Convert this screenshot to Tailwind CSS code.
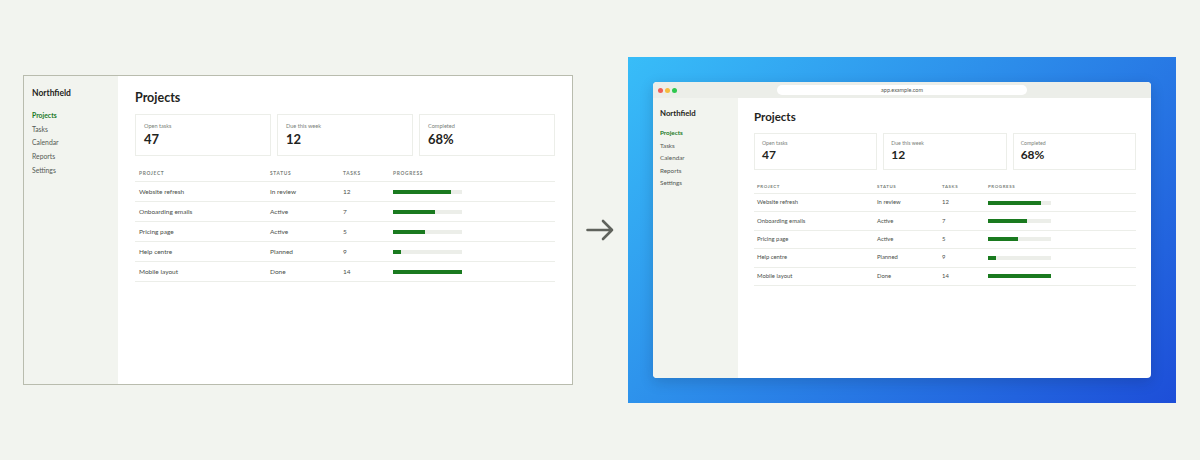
<!DOCTYPE html>
<html lang="en">

<head>
    <meta charset="UTF-8">
    <title>Northfield before and after</title>
    <script src="https://cdn.jsdelivr.net/npm/@tailwindcss/browser@4"></script>
</head>

<body class="bg-[#f2f4ef] h-[460px] w-[1200px] overflow-hidden font-['Lato',sans-serif] text-[#1f2421]">
    <div class="flex h-[460px] items-start">

        <!-- Flat screenshot -->
        <div class="ml-[23px] mt-[75px] w-[550px] h-[310px] border border-[#b9bcae] bg-white flex">
            <aside class="w-[94px] bg-[#f2f4ef] pl-[8px] pt-[12px]">
                <div class="text-[8.5px] leading-[11px] font-bold">Northfield</div>
                <nav class="mt-[11px] flex flex-col gap-[3px] text-[6.8px] leading-[10.7px] text-[#555a55]">
                    <span class="font-bold text-[#1a7a1f]">Projects</span>
                    <span>Tasks</span>
                    <span>Calendar</span>
                    <span>Reports</span>
                    <span>Settings</span>
                </nav>
            </aside>
            <main class="flex-1 pl-[17px] pr-[17px] pt-[13px]">
                <h1 class="text-[12.5px] leading-[17px] font-bold">Projects</h1>
                <div class="mt-[8px] grid grid-cols-3 gap-[6px]">
                    <div class="h-[42px] border border-[#eceee9] pl-[8px] pt-[7px]">
                        <div class="text-[5.6px] leading-[8px] text-[#7a7f7a]">Open tasks</div>
                        <div class="text-[13px] leading-[18px] font-bold">47</div>
                    </div>
                    <div class="h-[42px] border border-[#eceee9] pl-[8px] pt-[7px]">
                        <div class="text-[5.6px] leading-[8px] text-[#7a7f7a]">Due this week</div>
                        <div class="text-[13px] leading-[18px] font-bold">12</div>
                    </div>
                    <div class="h-[42px] border border-[#eceee9] pl-[8px] pt-[7px]">
                        <div class="text-[5.6px] leading-[8px] text-[#7a7f7a]">Completed</div>
                        <div class="text-[13px] leading-[18px] font-bold">68%</div>
                    </div>
                </div>
                <div class="mt-[13px] text-[6.5px] text-[#4a4f4a]">
                    <div class="grid grid-cols-[131px_73px_50px_1fr] h-[13px] pl-[4px] border-b border-[#eceee9] text-[4.8px] leading-[8px] font-bold tracking-[0.7px] text-[#7a7f7a]">
                        <span>PROJECT</span><span>STATUS</span><span>TASKS</span><span>PROGRESS</span>
                    </div>
                    <div class="grid grid-cols-[131px_73px_50px_1fr] items-center h-[20px] pl-[4px] border-b border-[#eceee9]">
                        <span>Website refresh</span><span>In review</span><span>12</span>
                        <div class="w-[69px] h-[4px] bg-[#eceee9]"><div class="h-full bg-[#1a7a1f] w-[58px]"></div></div>
                    </div>
                    <div class="grid grid-cols-[131px_73px_50px_1fr] items-center h-[20px] pl-[4px] border-b border-[#eceee9]">
                        <span>Onboarding emails</span><span>Active</span><span>7</span>
                        <div class="w-[69px] h-[4px] bg-[#eceee9]"><div class="h-full bg-[#1a7a1f] w-[42px]"></div></div>
                    </div>
                    <div class="grid grid-cols-[131px_73px_50px_1fr] items-center h-[20px] pl-[4px] border-b border-[#eceee9]">
                        <span>Pricing page</span><span>Active</span><span>5</span>
                        <div class="w-[69px] h-[4px] bg-[#eceee9]"><div class="h-full bg-[#1a7a1f] w-[32px]"></div></div>
                    </div>
                    <div class="grid grid-cols-[131px_73px_50px_1fr] items-center h-[20px] pl-[4px] border-b border-[#eceee9]">
                        <span>Help centre</span><span>Planned</span><span>9</span>
                        <div class="w-[69px] h-[4px] bg-[#eceee9]"><div class="h-full bg-[#1a7a1f] w-[8px]"></div></div>
                    </div>
                    <div class="grid grid-cols-[131px_73px_50px_1fr] items-center h-[20px] pl-[4px] border-b border-[#eceee9]">
                        <span>Mobile layout</span><span>Done</span><span>14</span>
                        <div class="w-[69px] h-[4px] bg-[#eceee9]"><div class="h-full bg-[#1a7a1f] w-[69px]"></div></div>
                    </div>
                </div>
            </main>
        </div>

        <!-- Arrow -->
        <svg class="ml-[13px] mt-[218px]" width="28" height="24" viewBox="0 0 28 24" fill="none" stroke="#5f625c" stroke-width="2.6" stroke-linecap="round" stroke-linejoin="round">
            <path d="M1.5 12H26M17 3l9 9-9 9" />
        </svg>

        <!-- Framed version on gradient -->
        <div class="ml-[14px] mt-[57px] w-[548px] h-[346px] pl-[25px] pt-[25px] bg-[linear-gradient(135deg,#38bdf8,#1d4ed8)]">
            <div class="w-[498px] h-[296px] rounded-[4px] overflow-hidden bg-white flex flex-col shadow-[0_4px_14px_rgba(15,23,42,0.18)]">
                <div class="h-[16px] bg-[#eceee9] flex items-center pl-[5px]">
                    <span class="w-[5px] h-[5px] rounded-full bg-[#ef5f57]"></span>
                    <span class="ml-[2px] w-[5px] h-[5px] rounded-full bg-[#f5bd3f]"></span>
                    <span class="ml-[2px] w-[5px] h-[5px] rounded-full bg-[#2fc84f]"></span>
                    <div class="ml-[100px] w-[250px] h-[10px] rounded-full bg-white text-center text-[5.5px] leading-[10px] text-[#555a55]">app.example.com</div>
                </div>
                <div class="flex flex-1">
                    <aside class="w-[85px] bg-[#f2f4ef] pl-[7px] pt-[10px]">
                        <div class="text-[7.8px] leading-[10px] font-bold">Northfield</div>
                        <nav class="mt-[10px] flex flex-col gap-[3px] text-[6.3px] leading-[9.5px] text-[#555a55]">
                            <span class="font-bold text-[#1a7a1f]">Projects</span>
                            <span>Tasks</span>
                            <span>Calendar</span>
                            <span>Reports</span>
                            <span>Settings</span>
                        </nav>
                    </aside>
                    <main class="flex-1 pl-[16px] pr-[15px] pt-[11px]">
                        <h1 class="text-[11.5px] leading-[15px] font-bold">Projects</h1>
                        <div class="mt-[9px] grid grid-cols-3 gap-[6px]">
                            <div class="h-[37px] border border-[#eceee9] pl-[7px] pt-[6px]">
                                <div class="text-[5.2px] leading-[7px] text-[#7a7f7a]">Open tasks</div>
                                <div class="text-[12px] leading-[16px] font-bold">47</div>
                            </div>
                            <div class="h-[37px] border border-[#eceee9] pl-[7px] pt-[6px]">
                                <div class="text-[5.2px] leading-[7px] text-[#7a7f7a]">Due this week</div>
                                <div class="text-[12px] leading-[16px] font-bold">12</div>
                            </div>
                            <div class="h-[37px] border border-[#eceee9] pl-[7px] pt-[6px]">
                                <div class="text-[5.2px] leading-[7px] text-[#7a7f7a]">Completed</div>
                                <div class="text-[12px] leading-[16px] font-bold">68%</div>
                            </div>
                        </div>
                        <div class="mt-[13px] text-[5.9px] text-[#4a4f4a]">
                            <div class="grid grid-cols-[120px_65px_46px_1fr] h-[11px] pl-[3px] border-b border-[#eceee9] text-[4.4px] leading-[7px] font-bold tracking-[0.6px] text-[#7a7f7a]">
                                <span>PROJECT</span><span>STATUS</span><span>TASKS</span><span>PROGRESS</span>
                            </div>
                            <div class="grid grid-cols-[120px_65px_46px_1fr] items-center h-[18.4px] pl-[3px] border-b border-[#eceee9]">
                                <span>Website refresh</span><span>In review</span><span>12</span>
                                <div class="w-[63px] h-[4px] bg-[#eceee9]"><div class="h-full bg-[#1a7a1f] w-[53px]"></div></div>
                            </div>
                            <div class="grid grid-cols-[120px_65px_46px_1fr] items-center h-[18.4px] pl-[3px] border-b border-[#eceee9]">
                                <span>Onboarding emails</span><span>Active</span><span>7</span>
                                <div class="w-[63px] h-[4px] bg-[#eceee9]"><div class="h-full bg-[#1a7a1f] w-[39px]"></div></div>
                            </div>
                            <div class="grid grid-cols-[120px_65px_46px_1fr] items-center h-[18.4px] pl-[3px] border-b border-[#eceee9]">
                                <span>Pricing page</span><span>Active</span><span>5</span>
                                <div class="w-[63px] h-[4px] bg-[#eceee9]"><div class="h-full bg-[#1a7a1f] w-[30px]"></div></div>
                            </div>
                            <div class="grid grid-cols-[120px_65px_46px_1fr] items-center h-[18.4px] pl-[3px] border-b border-[#eceee9]">
                                <span>Help centre</span><span>Planned</span><span>9</span>
                                <div class="w-[63px] h-[4px] bg-[#eceee9]"><div class="h-full bg-[#1a7a1f] w-[8px]"></div></div>
                            </div>
                            <div class="grid grid-cols-[120px_65px_46px_1fr] items-center h-[18.4px] pl-[3px] border-b border-[#eceee9]">
                                <span>Mobile layout</span><span>Done</span><span>14</span>
                                <div class="w-[63px] h-[4px] bg-[#eceee9]"><div class="h-full bg-[#1a7a1f] w-[63px]"></div></div>
                            </div>
                        </div>
                    </main>
                </div>
            </div>
        </div>
    </div>
</body>

</html>
